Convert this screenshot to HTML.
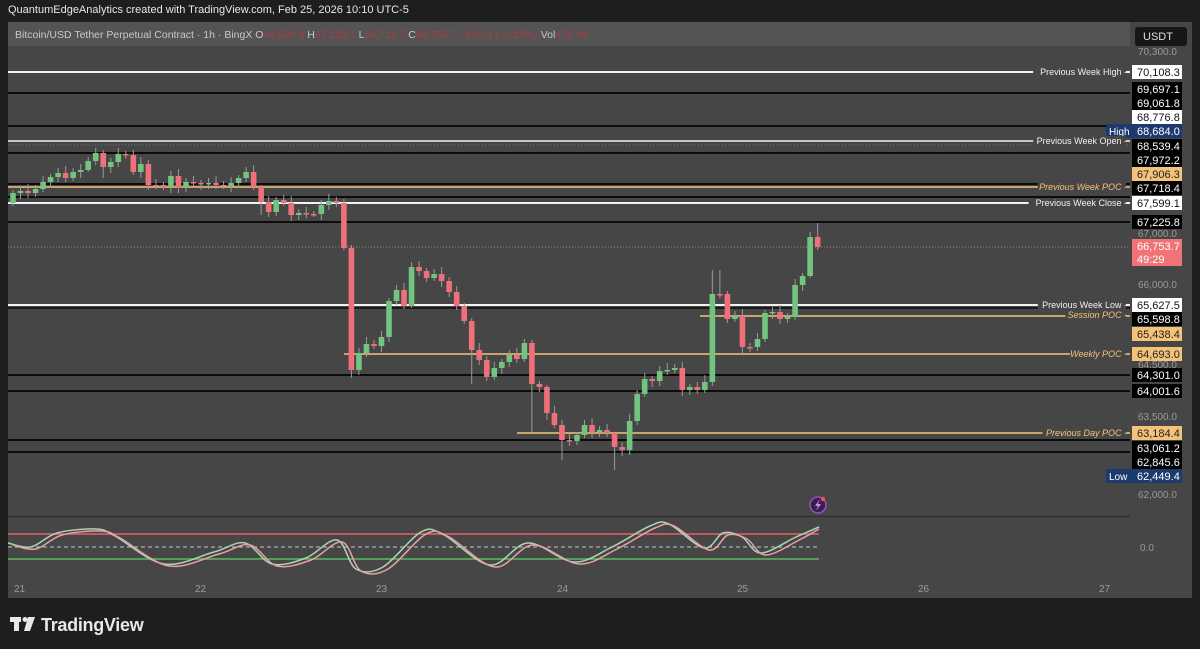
<!DOCTYPE html>
<html><head><meta charset="utf-8">
<style>
body{margin:0;width:1200px;height:649px;background:#1e1e1e;overflow:hidden;font-family:"Liberation Sans",sans-serif;position:relative}
.hdr{position:absolute;left:8px;top:4px;color:#e8e8e8;font-size:11px}
svg{position:absolute;left:0;top:0}
</style></head><body>
<svg width="1200" height="649" id="s" font-family="Liberation Sans, sans-serif">
<rect x="8" y="22" width="1184" height="576" fill="#464646"/>
<rect x="8" y="22" width="1122" height="24" fill="#545454"/>
<text x="15" y="38" font-size="10.5" fill="#c8c8c8">Bitcoin/USD Tether Perpetual Contract · 1h · BingX  O<tspan fill="#a83c48">66,930.3</tspan>  H<tspan fill="#a83c48">67,228.1</tspan>  L<tspan fill="#a83c48">66,718.7</tspan>  C<tspan fill="#a83c48">66,753.7  −193.3 (−0.29%)</tspan>  Vol<tspan fill="#a83c48">478.09</tspan></text>
<line x1="8" y1="516.5" x2="1130" y2="516.5" stroke="#2e2e2e" stroke-width="1.5"/>
<g id="lines"></g>
<g id="candles"></g>
<g id="osc"></g>
<g id="axis" font-size="10" fill="#9a9a9a"></g>
<g id="labels" font-size="10"></g>
<rect x="1135" y="27" width="52" height="19" rx="3" fill="#161616"/>
<text x="1143" y="40" font-size="11" fill="#e0e0e0">USDT</text>
<circle cx="818" cy="505" r="8" fill="#3a1f4a" stroke="#9a4fc8" stroke-width="1.5"/>
<path d="M820 499 L815 506 L818 506 L816 511 L821 504 L818 504 Z" fill="#c98ef0"/>
<circle cx="823" cy="499" r="2.2" fill="#f05050"/>
<g fill="#e8e8e8">
<rect x="10" y="617" width="11" height="5"/><rect x="14" y="617" width="5" height="14"/>
<circle cx="25" cy="619.5" r="2.5"/><path d="M28 617 L35 617 L30 631 L24 631 Z"/>
</g>
<text x="41" y="631" font-size="18" font-weight="bold" fill="#e8e8e8" letter-spacing="-0.3">TradingView</text>
</svg>
<div class="hdr">QuantumEdgeAnalytics created with TradingView.com, Feb 25, 2026 10:10 UTC-5</div>
<script>
const NS="http://www.w3.org/2000/svg";
function el(p,t,a,txt){const e=document.createElementNS(NS,t);for(const k in a)e.setAttribute(k,a[k]);if(txt!==undefined)e.textContent=txt;document.getElementById(p).appendChild(e);return e;}
const L=[[72,'#f2f2f2',2,8],[93,'#0c0c0c',2,8],[126,'#0c0c0c',2,8],[141,'#f2f2f2',1.5,8],[153,'#0c0c0c',2,8],[184,'#0c0c0c',2,8],[187,'#f5c27a',1.5,8],[197,'#0c0c0c',2,8],[203,'#f2f2f2',2,8],[222,'#0c0c0c',2,8],[305,'#f2f2f2',2,8],[308,'#0c0c0c',1.5,8],[316,'#f5c27a',1.5,700],[354,'#f5c27a',1.5,344],[375,'#0c0c0c',2,8],[391,'#0c0c0c',2,8],[433,'#f5c27a',1.5,517],[440,'#0c0c0c',2,8],[452,'#0c0c0c',2,8]];
L.forEach(l=>el('lines','line',{x1:l[3],x2:1130,y1:l[0],y2:l[0],stroke:l[1],'stroke-width':l[2]}));
el('lines','line',{x1:8,x2:1130,y1:145,y2:145,stroke:'#777','stroke-width':1,'stroke-dasharray':'1 2'});
el('lines','line',{x1:8,x2:1130,y1:247,y2:247,stroke:'#c87a50','stroke-width':1,'stroke-dasharray':'1 2'});
const C=[193,191,193,189,182,177,173,178,172,170,161,153,167,162,154,155,172,164,185,185,187,176,188,182,183,184,183,185,186,183,178,172,187,202,212,200,203,215,213,214,214,205,201,203,248,370,353,344,346,337,301,290,306,267,271,278,274,281,292,306,321,350,360,377,368,362,355,359,343,384,387,413,425,440,441,435,425,432,430,433,447,450,421,394,379,381,371,370,368,390,387,390,382,294,294,319,316,347,347,339,313,312,319,317,285,276,237,247];
const W={44:[199,250],45:[245,378],69:[340,432],73:[420,460],80:[432,470],93:[270,386],94:[270,298],106:[232,278],107:[223,250],53:[262,308],61:[318,384],71:[385,420],12:[150,178],10:[157,172],33:[185,215]};
let o=203;
C.forEach((c,i)=>{const x=13+i*7.52;const up=c<o;const col=up?'#72c47f':'#f0707a';
const t=Math.min(o,c),b=Math.max(o,c);let hi=t-3-(i*7%5),lo=b+3+(i*3%4);if(W[i]){hi=W[i][0];lo=W[i][1];}
el('candles','line',{x1:x,x2:x,y1:hi,y2:lo,stroke:'#9a9a9a','stroke-width':1});
el('candles','rect',{x:x-2.8,y:t,width:5.6,height:Math.max(1.5,b-t),fill:col});o=c;});
el('osc','line',{x1:8,x2:819,y1:534,y2:534,stroke:'#e8606a','stroke-width':1.5});
el('osc','line',{x1:8,x2:819,y1:547,y2:547,stroke:'#c8c8c8','stroke-width':1,'stroke-dasharray':'4 3'});
el('osc','line',{x1:8,x2:819,y1:559,y2:559,stroke:'#5cb860','stroke-width':1.5});
const P=[[8,543],[31,547],[57,533],[96,529],[115,536],[164,564],[214,552],[245,543],[272,564],[306,558],[337,540],[356,569],[383,567],[421,532],[444,535],[490,565],[528,543],[574,562],[612,547],[650,526],[669,524],[704,548],[723,533],[742,537],[761,553],[796,537],[819,527]];
function smooth(pts){let d='M'+pts[0][0]+' '+pts[0][1];for(let i=0;i<pts.length-1;i++){const p0=pts[i-1]||pts[i],p1=pts[i],p2=pts[i+1],p3=pts[i+2]||p2;
d+=` C${p1[0]+(p2[0]-p0[0])/6} ${p1[1]+(p2[1]-p0[1])/6} ${p2[0]-(p3[0]-p1[0])/6} ${p2[1]-(p3[1]-p1[1])/6} ${p2[0]} ${p2[1]}`;}return d;}
el('osc','path',{d:smooth(P),fill:'none',stroke:'#a8d8b0','stroke-width':1.5});
el('osc','path',{d:smooth(P.map(p=>[Math.min(p[0]+5,819),p[1]+2])),fill:'none',stroke:'#e8a0a8','stroke-width':1.5});
[[51,'70,300.0'],[233,'67,000.0'],[284,'66,000.0'],[416,'63,500.0'],[494,'62,000.0'],[364,'64,500.0']].forEach(a=>el('axis','text',{x:1138,y:a[0]+4},a[1]));
el('axis','text',{x:1140,y:551},'0.0');
[[19,'21'],[200,'22'],[381,'23'],[562,'24'],[742,'25'],[923,'26'],[1104,'27']].forEach(a=>el('axis','text',{x:a[0]-5,y:592},a[1]));
const B=[[72,'70,108.3','#fff','#111'],[89,'69,697.1','#000','#fff'],[103,'69,061.8','#000','#fff'],[117,'68,776.8','#fff','#111'],[131,'68,684.0','#1c3a6e','#fff'],[146,'68,539.4','#000','#fff'],[160,'67,972.2','#000','#fff'],[174,'67,906.3','#f5c27a','#222'],[188,'67,718.4','#000','#fff'],[203,'67,599.1','#fff','#111'],[222,'67,225.8','#000','#fff'],[305,'65,627.5','#fff','#111'],[319,'65,598.8','#000','#fff'],[334,'65,438.4','#f5c27a','#222'],[354,'64,693.0','#f5c27a','#222'],[375,'64,301.0','#000','#fff'],[391,'64,001.6','#000','#fff'],[433,'63,184.4','#f5c27a','#222'],[448,'63,061.2','#000','#fff'],[462,'62,845.6','#000','#fff'],[476,'62,449.4','#1c3a6e','#fff']];
el('labels','rect',{x:1132,y:239,width:50,height:27,fill:'#f07378'});
el('labels','text',{x:1137,y:250,fill:'#fff','font-size':11},'66,753.7');
el('labels','text',{x:1137,y:263,fill:'#fff','font-size':11},'49:29');
B.forEach(b=>{el('labels','rect',{x:1132,y:b[0]-7,width:50,height:14,fill:b[2]});el('labels','text',{x:1137,y:b[0]+4,fill:b[3],'font-size':11},b[1]);});
[[131,'High'],[476,'Low']].forEach(b=>{el('labels','rect',{x:1106,y:b[0]-7,width:26,height:14,fill:'#1c3a6e'});el('labels','text',{x:1109,y:b[0]+4,fill:'#fff','font-size':10},b[1]);});
const T=[[72,'Previous Week High',0],[141,'Previous Week Open',0],[187,'Previous Week POC',1],[203,'Previous Week Close',0],[305,'Previous Week Low',0],[315,'Session POC',1],[354,'Weekly POC',1],[433,'Previous Day POC',1]];
T.forEach(t=>{const w=t[1].length*4.6+10;el('labels','rect',{x:1126-w,y:t[0]-5,width:w,height:10,fill:'#464646'});
el('labels','text',{x:1127,y:t[0]+3,'text-anchor':'end','font-size':9,fill:t[2]?'#f5c27a':'#f0f0f0','font-style':t[2]?'italic':'normal'},t[1]+' -');});
</script>
</body></html>
